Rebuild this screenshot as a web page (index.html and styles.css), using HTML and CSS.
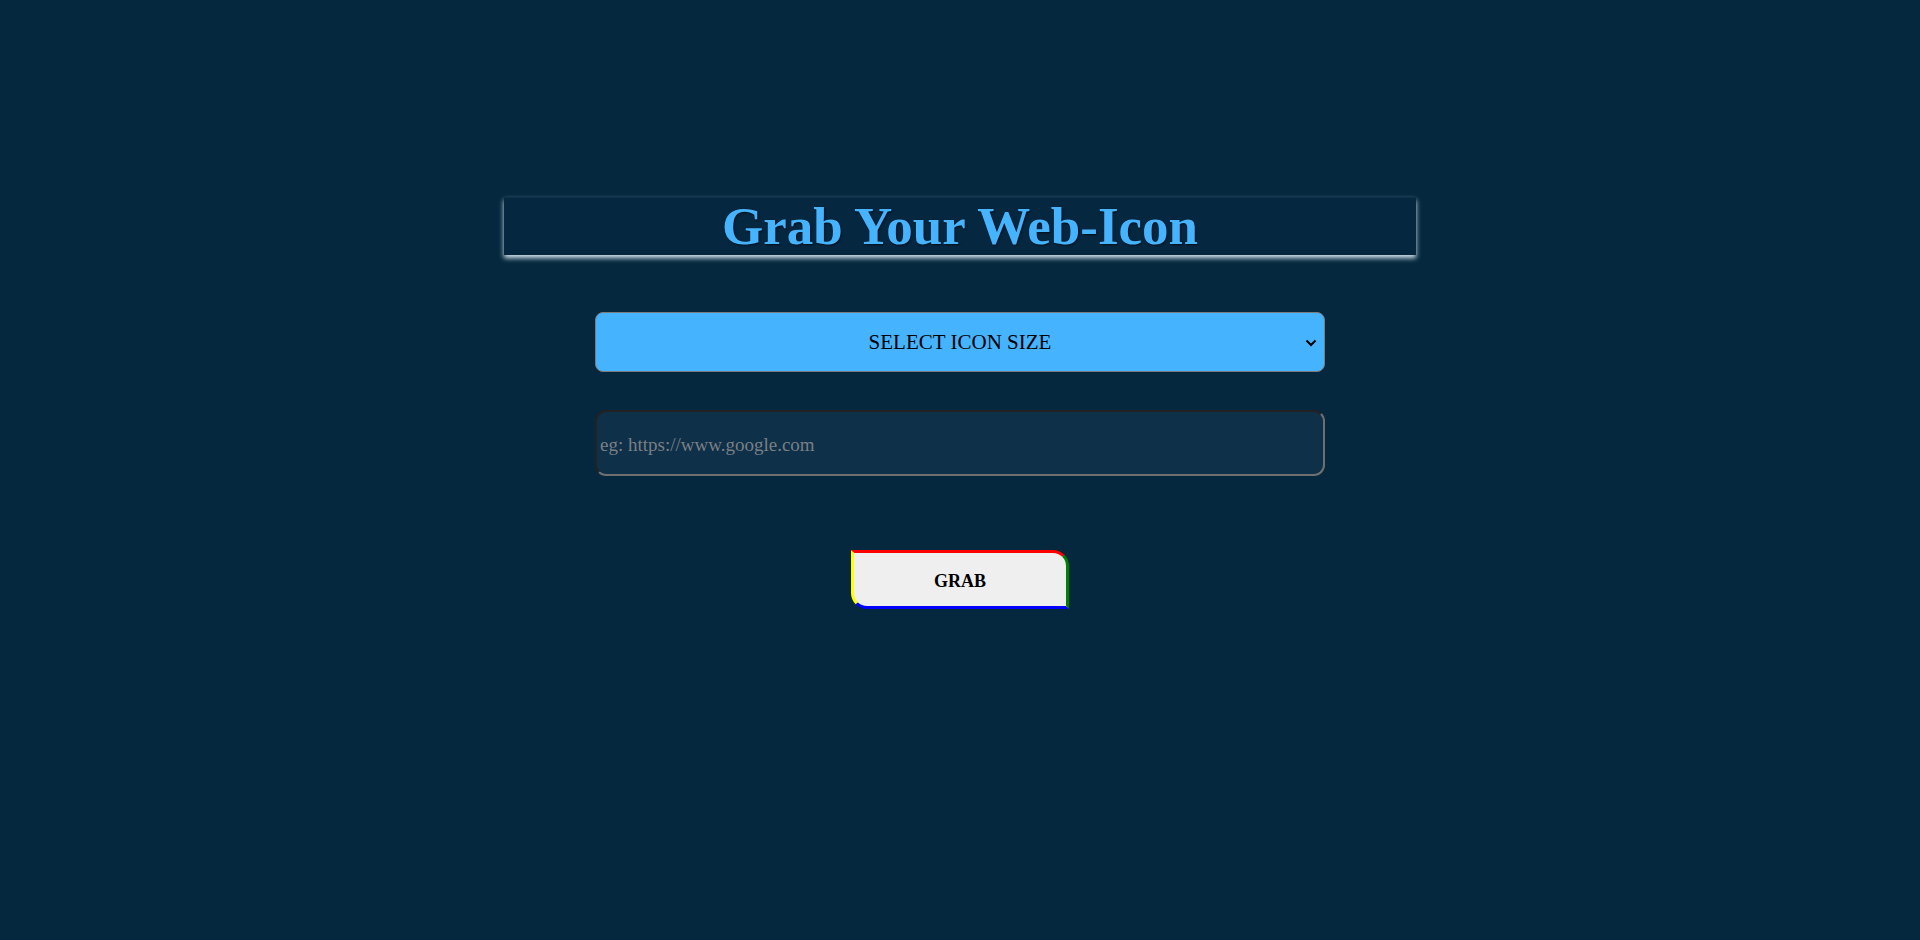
FILE: index.html
```html
<!DOCTYPE html>
<html lang="en">
<head>
<meta charset="utf-8">
<title>Grab Your Web-Icon</title>
<link rel="stylesheet" href="styles.css">
</head>
<body>
<main class="page">
  <h1 class="title">Grab Your Web-Icon</h1>
  <form class="form" onsubmit="return false">
    <div class="select-wrap">
      <select class="size-select">
        <option>SELECT ICON SIZE</option>
      </select>
      <svg class="chev" width="12" height="8" viewBox="0 0 12 8"><path d="M1.5 1.5 L6 6 L10.5 1.5" fill="none" stroke="#000" stroke-width="2"/></svg>
    </div>
    <input class="url-input" type="text" placeholder="eg: https://www.google.com">
    <button class="grab" type="submit">GRAB</button>
  </form>
</main>
</body>
</html>
```
FILE: styles.css
```css
html, body {
  margin: 0;
  padding: 0;
  height: 100%;
}
body {
  background: #05283e;
  font-family: "Liberation Serif", serif;
}
.page {
  display: flex;
  flex-direction: column;
  align-items: center;
  padding-top: 197px;
}
.title {
  box-sizing: border-box;
  width: 912px;
  height: 58px;
  margin: 0;
  border-top: 1px solid #0c3148;
  background: #062740;
  box-shadow: 0 3px 5px rgba(225, 240, 250, 0.95);
  color: #46b3ff;
  font-family: "Liberation Serif", serif;
  font-weight: 700;
  font-size: 53px;
  line-height: 56px;
  text-align: center;
  text-shadow: 1px 1px 2px rgba(0, 0, 0, 0.6);
}
.form {
  display: flex;
  flex-direction: column;
  align-items: center;
  margin-top: 57px;
}
.select-wrap {
  position: relative;
  width: 730px;
  height: 60px;
}
.size-select {
  appearance: none;
  -webkit-appearance: none;
  box-sizing: border-box;
  width: 100%;
  height: 100%;
  background: #46b3ff;
  border: 1px solid #7c7c7c;
  border-radius: 8px;
  color: #000;
  font-family: "Liberation Serif", serif;
  font-size: 21px;
  text-align: center;
  text-align-last: center;
}
.chev {
  position: absolute;
  right: 8px;
  top: 27px;
  pointer-events: none;
}
.url-input {
  box-sizing: border-box;
  width: 730px;
  height: 66px;
  margin-top: 38px;
  padding: 4px 3px 0;
  background: #0e3049;
  border: 2px solid;
  border-color: #222 #6f6f6f #6f6f6f #222;
  border-radius: 11px;
  color: #ddd;
  font-family: "Liberation Serif", serif;
  font-size: 19px;
}
.url-input::placeholder {
  color: #7a7f84;
}
.grab {
  box-sizing: border-box;
  width: 218px;
  height: 59px;
  margin-top: 74px;
  padding-top: 4px;
  background: #efefef;
  border: 3px solid;
  border-color: #ff0000 #008000 #0000ff #ffff00;
  border-radius: 0 16px 0 16px;
  color: #000;
  font-family: "Liberation Serif", serif;
  font-size: 18px;
  font-weight: 700;
  cursor: pointer;
}
```
